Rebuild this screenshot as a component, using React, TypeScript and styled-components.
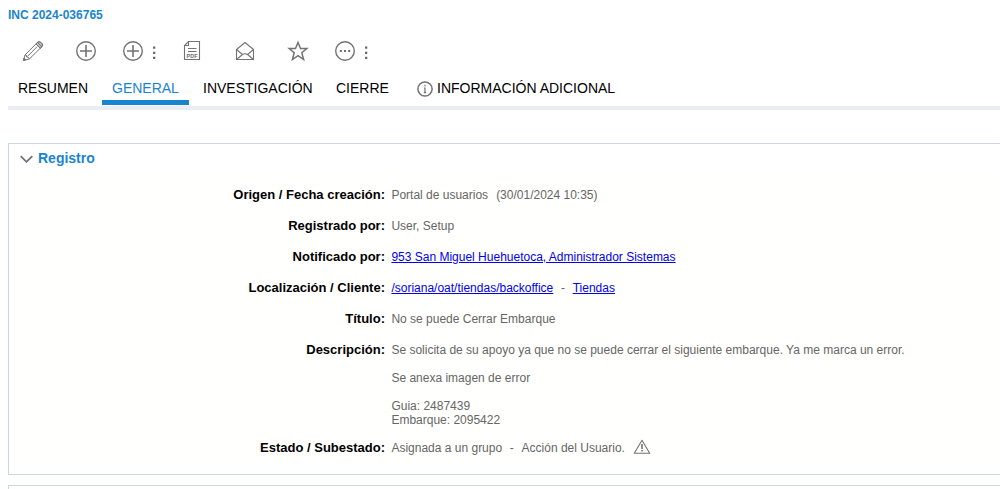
import React from "react";
import styled, { createGlobalStyle } from "styled-components";

const Global = createGlobalStyle`
  html, body { margin: 0; background: #fff; overflow: hidden; }
  body { font-family: "Liberation Sans", Arial, sans-serif; }
`;

const Page = styled.main`
  height: 489px;
  padding-left: 8px;
  box-sizing: border-box;
  overflow: hidden;
`;

const Ticket = styled.h1`
  margin: 0;
  height: 30px;
  font-size: 12px;
  line-height: 30px;
  color: #1a84cf;
`;

const Toolbar = styled.div`
  display: flex;
  align-items: center;
  height: 42px;
  padding-left: 14px;
`;

const Tool = styled.button<{ $gap: number }>`
  display: flex;
  padding: 0;
  border: 0;
  background: none;
  margin-right: ${(p) => p.$gap}px;
`;

const Icon = styled.svg`
  display: block;
  flex: none;
  fill: none;
  stroke: #737373;
`;

const Tabs = styled.nav`
  display: flex;
  gap: 4px;
  height: 34px;
  border-bottom: 4px solid #eaedf3;
`;

const Tab = styled.a<{ $width: number; $active?: boolean }>`
  display: flex;
  align-items: center;
  box-sizing: border-box;
  width: ${(p) => p.$width}px;
  height: 33px;
  padding: 4px 0 0 10px;
  border-bottom: 5px solid ${(p) => (p.$active ? "#1784cf" : "transparent")};
  color: ${(p) => (p.$active ? "#1a84cf" : "#000")};
  font-size: 14px;
  white-space: nowrap;

  svg {
    margin: 1px 4px 0 0;
  }
`;

const Panel = styled.section`
  box-sizing: border-box;
  height: 332px;
  margin-top: 33px;
  border: 1px solid #ccd5e3;
  border-right: 0;
`;

const NextPanel = styled(Panel)`
  margin-top: 10px;
`;

const PanelHeader = styled.h2`
  display: flex;
  align-items: center;
  gap: 5px;
  height: 29px;
  margin: 0;
  padding: 0 0 2px 11px;
  box-sizing: border-box;
  font-size: 14px;
  color: #1a84cf;

  svg {
    margin-top: 2px;
  }
`;

const Fields = styled.dl`
  height: 292px;
  margin: 0 0 0 8px;
  padding-top: 6px;
  box-sizing: border-box;
  background: #fffffd;
`;

const Field = styled.div<{ $height?: number }>`
  display: flex;
  height: ${(p) => p.$height ?? 31}px;
`;

const Label = styled.dt`
  width: 368px;
  text-align: right;
  font-size: 13px;
  font-weight: bold;
  line-height: 31px;
  color: #000;
`;

const Value = styled.dd`
  display: flex;
  margin: 0 0 0 6.4px;
  font-size: 12px;
  line-height: 32px;
  color: #666;
  white-space: pre;
`;

const Created = styled.span`
  margin-left: 8px;
`;

const Description = styled(Value)`
  display: block;
  padding-top: 9px;
  line-height: 14px;
`;

const Link = styled.a`
  color: #0000ee;
  text-decoration: underline;
`;

const Dash = styled.span`
  width: 19.4px;
  text-align: center;
`;

const Warning = styled(Icon)`
  margin: 7px 0 0 8px;
`;

const Plus = () => (
  <Icon width="22" height="22" viewBox="0 0 22 22" strokeWidth="1.4">
    <circle cx="11" cy="11" r="9.3" />
    <path d="M11 5v12M5 11h12" strokeWidth="1.6" />
  </Icon>
);

const Dots = () => (
  <Icon width="4" height="22" viewBox="0 0 4 22">
    <path d="M1 6.5h2.3v2.3H1zM1 11.8h2.3v2.3H1zM1 16.7h2.3v2.3H1z" fill="#6b6b6b" stroke="none" />
  </Icon>
);

const Pencil = () => (
  <Icon width="22" height="22" viewBox="0 0 22 22" strokeWidth="1" strokeLinejoin="round">
    <path d="M15.5 2.3Q17 1 19 2.5l.8.8Q21.3 5 20 6.5L18.5 8.4 14 4z" fill="#c4c4c4" />
    <path d="M1.5 20.5 3 15 15.5 2.3Q17 1 19 2.5l.8.8Q21.3 5 20 6.5L7.3 19z" />
    <path d="M3 15l1.2.2.5 1.8 1.8.4.8 1.6M14 4l4.5 4.4M15.5 2.5 20 7M5.6 16.3 15.2 6.6" />
    <path d="m1.5 20.5.6-2.5 1.7 1.7z" fill="#737373" />
  </Icon>
);

const Pdf = () => (
  <Icon width="18" height="22" viewBox="0 0 18 22" strokeWidth="1.1">
    <path d="M1.5 5.5v14h15v-18h-11zM5.5 1.5v4h-4" />
    <path d="M5 8.5h8.5M5 11.5h8.5" />
    <text x="9" y="17.6" textAnchor="middle" fontSize="5.4" fontWeight="bold" fill="#6b6b6b" stroke="none" textLength="11">
      PDF
    </text>
  </Icon>
);

const Mail = () => (
  <Icon width="20" height="20" viewBox="0 0 20 20" strokeWidth="1.1" strokeLinejoin="round">
    <path d="M1.5 8.5 10 1.5l8.5 7v10h-17zM1.5 8.5 7.5 13.5M18.5 8.5l-6 5M1.5 18.5l6-5q2.5-1.6 5 0l6 5" />
  </Icon>
);

const Star = () => (
  <Icon width="22" height="22" viewBox="0 0 22 22" strokeWidth="1.5">
    <path d="m11 2.5 2.5 6h6.3l-5 4.2 1.8 6.8-5.6-3.8-5.6 3.8 1.8-6.8-5-4.2h6.3z" />
  </Icon>
);

const More = () => (
  <Icon width="22" height="22" viewBox="0 0 22 22" strokeWidth="1.4">
    <circle cx="11" cy="11" r="9.3" />
    <path d="M5.8 10h2v2h-2zM10 10h2v2h-2zM14.2 10h2v2h-2z" fill="#6b6b6b" stroke="none" />
  </Icon>
);

const Info = () => (
  <Icon width="16" height="16" viewBox="0 0 16 16" strokeWidth="1.5">
    <circle cx="8" cy="8" r="7.1" />
    <path d="M8 3.8v1.6M7 7h1v4.8M6.8 11.7h2.4" strokeWidth="1.2" />
  </Icon>
);

export default function App() {
  return (
    <Page>
      <Global />
      <Ticket>INC 2024-036765</Ticket>
      <Toolbar>
        <Tool $gap={31}><Pencil /></Tool>
        <Tool $gap={25}><Plus /></Tool>
        <Tool $gap={8}><Plus /></Tool>
        <Tool $gap={27}><Dots /></Tool>
        <Tool $gap={34}><Pdf /></Tool>
        <Tool $gap={32}><Mail /></Tool>
        <Tool $gap={25}><Star /></Tool>
        <Tool $gap={8}><More /></Tool>
        <Tool $gap={0}><Dots /></Tool>
      </Toolbar>
      <Tabs>
        <Tab $width={90}>RESUMEN</Tab>
        <Tab $width={87} $active>GENERAL</Tab>
        <Tab $width={129}>INVESTIGACIÓN</Tab>
        <Tab $width={77}>CIERRE</Tab>
        <Tab $width={220}><Info />INFORMACIÓN ADICIONAL</Tab>
      </Tabs>
      <Panel>
        <PanelHeader>
          <Icon width="13" height="8" viewBox="0 0 13 8" strokeWidth="1.8">
            <path d="M.7 1.2 6.5 6.8l5.8-5.6" />
          </Icon>
          Registro
        </PanelHeader>
        <Fields>
          <Field>
            <Label>Origen / Fecha creación:</Label>
            <Value>Portal de usuarios<Created>(30/01/2024 10:35)</Created></Value>
          </Field>
          <Field>
            <Label>Registrado por:</Label>
            <Value>User, Setup</Value>
          </Field>
          <Field>
            <Label>Notificado por:</Label>
            <Value><Link>953 San Miguel Huehuetoca, Administrador Sistemas</Link></Value>
          </Field>
          <Field>
            <Label>Localización / Cliente:</Label>
            <Value><Link>/soriana/oat/tiendas/backoffice</Link><Dash>-</Dash><Link>Tiendas</Link></Value>
          </Field>
          <Field>
            <Label>Título:</Label>
            <Value>No se puede Cerrar Embarque</Value>
          </Field>
          <Field $height={98}>
            <Label>Descripción:</Label>
            <Description>{"Se solicita de su apoyo ya que no se puede cerrar el siguiente embarque. Ya me marca un error.\n\nSe anexa imagen de error\n\nGuia: 2487439\nEmbarque: 2095422"}</Description>
          </Field>
          <Field>
            <Label>Estado / Subestado:</Label>
            <Value>
              Asignada a un grupo<Dash>-</Dash>Acción del Usuario.
              <Warning width="18" height="16" viewBox="0 0 18 16" strokeWidth="1.1">
                <path d="M9 1.3 16.7 14.2H1.3z" strokeLinejoin="round" />
                <path d="M9 5v5M9 11v1.6" strokeWidth="1.6" />
              </Warning>
            </Value>
          </Field>
        </Fields>
      </Panel>
      <NextPanel />
    </Page>
  );
}
